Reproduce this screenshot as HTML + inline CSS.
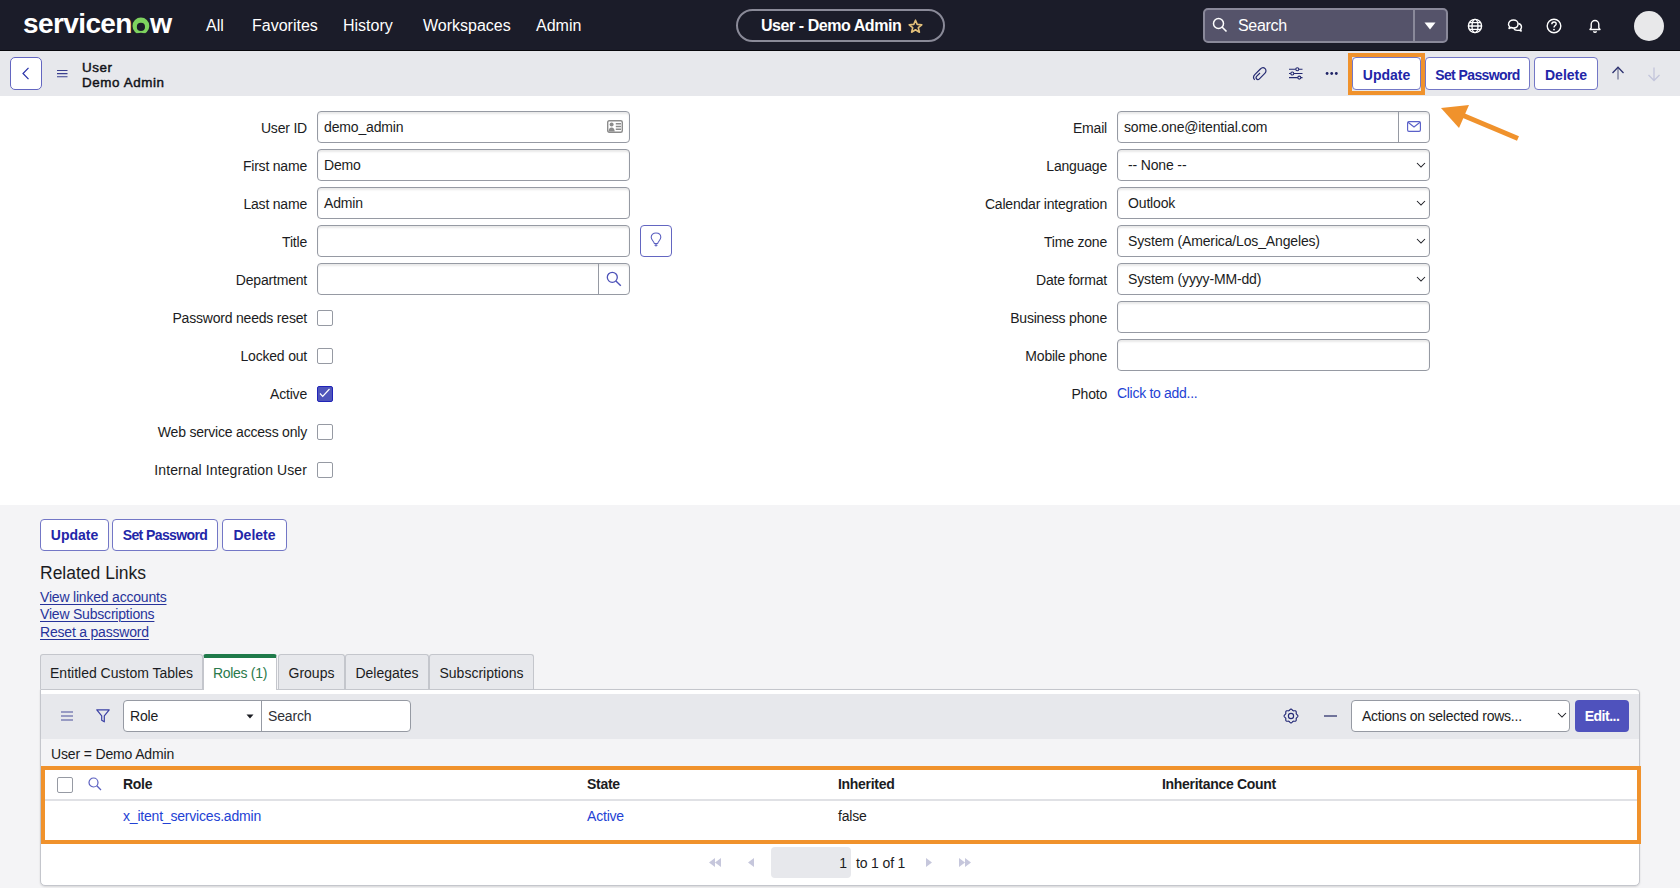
<!DOCTYPE html>
<html><head><meta charset="utf-8">
<style>
*{box-sizing:border-box;margin:0;padding:0}
html,body{-webkit-font-smoothing:antialiased;width:1680px;height:888px;overflow:hidden;background:#f4f4f6;font-family:"Liberation Sans",sans-serif;color:#1b1c22}
.a{position:absolute}
#hdr{left:0;top:0;width:1680px;height:50px;background:#1b1c29}
.nav{color:#fff;font-size:16px;top:17px;white-space:nowrap;line-height:18px}
#fh{left:0;top:50px;width:1680px;height:46px;background:#e7e8ec;border-top:1px solid #08080c}
#form{left:0;top:96px;width:1680px;height:409px;background:#fff}
.lbl{font-size:14px;letter-spacing:-0.2px;text-align:right;white-space:nowrap;color:#1b1c22;line-height:16px;width:300px}
.inp{background:#fff;border:1px solid #969aa3;border-radius:4px;box-shadow:inset 0 2px 2px rgba(0,0,0,.09);height:32px;width:313px}
.itx{font-size:14px;letter-spacing:-0.15px;white-space:nowrap;color:#1b1c22;line-height:16px}
.cb{width:16px;height:16px;border:1px solid #969aa3;border-radius:2px;background:#fff}
.btn{background:#fff;border:1px solid #7377c6;border-radius:4px;color:#2226a8;font-weight:bold;font-size:14px;text-align:center;white-space:nowrap;line-height:30px}
.lnk{color:#27339a;font-size:14px;letter-spacing:-0.2px;text-decoration:underline;text-decoration-thickness:1px;text-underline-offset:1.5px;white-space:nowrap;line-height:16px}
.tab{top:654px;height:35px;background:#e7e8ec;border:1px solid #c4c6cc;border-bottom:none;border-radius:3px 3px 0 0;font-size:14px;text-align:center;line-height:36px;white-space:nowrap;color:#1b1c22}
.th{font-weight:bold;font-size:14px;letter-spacing:-0.3px;white-space:nowrap;line-height:16px;top:776px}
.td{font-size:14px;letter-spacing:-0.2px;white-space:nowrap;line-height:16px;top:808px}
.sel{background:#fff;border:1px solid #969aa3;border-radius:4px;height:32px;width:313px}
svg{position:absolute;overflow:visible}
</style></head><body>
<!-- top header -->
<div id="hdr" class="a"></div>
<div class="a" style="left:23px;top:8px;font-size:28px;font-weight:bold;color:#fff;letter-spacing:-0.6px;line-height:32px">servicen</div>
<svg style="left:131px;top:16.5px" width="20" height="18" viewBox="0 0 20 18"><defs><clipPath id="lc"><rect x="0" y="0" width="20" height="16.8"/></clipPath></defs><circle cx="9.9" cy="9.0" r="8.4" fill="#7ed35f" clip-path="url(#lc)"/><circle cx="9.9" cy="9.9" r="4.1" fill="#1b1c29"/><ellipse cx="9.9" cy="17.6" rx="4.8" ry="1.9" fill="#1b1c29"/></svg>
<div class="a" style="left:150px;top:7px;font-size:28.5px;font-weight:bold;color:#fff;line-height:32px">w</div>
<div class="a nav" style="left:206px">All</div>
<div class="a nav" style="left:252px">Favorites</div>
<div class="a nav" style="left:343px">History</div>
<div class="a nav" style="left:423px">Workspaces</div>
<div class="a nav" style="left:536px">Admin</div>
<div class="a" style="left:735.5px;top:9px;width:209px;height:33px;border:2px solid #8a8a98;border-radius:17px"></div>
<div class="a nav" style="left:761px;font-weight:bold;letter-spacing:-0.45px">User - Demo Admin</div>
<svg style="left:908px;top:19px" width="15" height="15" viewBox="0 0 15 15"><path d="M7.5 1.2 L9.2 5.4 L13.8 5.8 L10.3 8.7 L11.4 13.2 L7.5 10.8 L3.6 13.2 L4.7 8.7 L1.2 5.8 L5.8 5.4 Z" fill="none" stroke="#e3c07a" stroke-width="1.6" stroke-linejoin="round"/></svg>
<div class="a" style="left:1202.5px;top:8px;width:245px;height:35px;background:#55536a;border:2px solid #8a899a;border-radius:5px"></div>
<div class="a" style="left:1413px;top:10px;width:1.5px;height:31px;background:#8a899a"></div>
<svg style="left:1212px;top:17px" width="16" height="16" viewBox="0 0 16 16"><circle cx="6.5" cy="6.5" r="5" fill="none" stroke="#fff" stroke-width="1.5"/><path d="M10 10 L14.5 14.5" stroke="#fff" stroke-width="1.6"/></svg>
<div class="a nav" style="left:1238px;top:17px;letter-spacing:-0.3px">Search</div>
<svg style="left:1424px;top:21.5px" width="12" height="8" viewBox="0 0 12 8"><path d="M0.5 0.5 L11.5 0.5 L6 7.5 Z" fill="#fff"/></svg>
<svg style="left:1467px;top:17.5px" width="16" height="16" viewBox="0 0 16 16"><g fill="none" stroke="#fff" stroke-width="1.4"><circle cx="8" cy="8" r="6.6"/><ellipse cx="8" cy="8" rx="3" ry="6.6"/><path d="M1.4 8 H14.6 M2.5 4.6 H13.5 M2.5 11.4 H13.5"/></g></svg>
<svg style="left:1507px;top:17.5px" width="16" height="16" viewBox="0 0 16 16"><g fill="none" stroke="#fff" stroke-width="1.4" stroke-linejoin="round"><path d="M1.5 6.5 C1.5 3.5 4 2 6.5 2 C9 2 11 3.5 11 6 C11 8.5 9 10 6.5 10 C5.5 10 4.8 9.8 4.2 9.5 L2 10.5 L2.6 8.5 C1.9 7.9 1.5 7.2 1.5 6.5 Z"/><path d="M11.3 5.5 C13.3 6 14.5 7.3 14.5 9 C14.5 9.8 14.2 10.5 13.6 11 L14.2 13 L12 12.1 C11.5 12.3 10.9 12.4 10.3 12.4 C8.6 12.4 7.2 11.6 6.6 10.3"/></g></svg>
<svg style="left:1546px;top:17.5px" width="16" height="16" viewBox="0 0 16 16"><g fill="none" stroke="#fff" stroke-width="1.4"><circle cx="8" cy="8" r="6.8"/><path d="M5.8 6.2 C5.8 4.8 6.8 4 8 4 C9.3 4 10.2 4.8 10.2 5.9 C10.2 7.4 8 7.6 8 9.4"/></g><circle cx="8" cy="11.6" r="0.9" fill="#fff"/></svg>
<svg style="left:1587px;top:17.5px" width="16" height="16" viewBox="0 0 16 16"><g fill="none" stroke="#fff" stroke-width="1.4" stroke-linejoin="round"><path d="M3 11.5 H13 L11.8 9.8 V6.5 C11.8 4.3 10.2 2.5 8 2.5 C5.8 2.5 4.2 4.3 4.2 6.5 V9.8 Z"/><path d="M6.5 13.2 C6.8 14 7.3 14.3 8 14.3 C8.7 14.3 9.2 14 9.5 13.2"/></g></svg>
<div class="a" style="left:1634px;top:11px;width:30px;height:30px;border-radius:50%;background:#e8e8ea"></div>

<!-- form header -->
<div id="fh" class="a"></div>
<div class="a" style="left:10px;top:57px;width:32px;height:33px;background:#fff;border:1px solid #6366c1;border-radius:5px"></div>
<svg style="left:22px;top:67px" width="8" height="13" viewBox="0 0 8 13"><path d="M6.5 0.8 L1 6.5 L6.5 12.2" fill="none" stroke="#2730a8" stroke-width="1.2"/></svg>
<svg style="left:57px;top:69px" width="11" height="9" viewBox="0 0 11 9"><path d="M0 1.5 H10.5 M0 4.6 H10.5 M0 7.8 H10.5" stroke="#3a3f8f" stroke-width="1.05"/></svg>
<div class="a" style="left:82px;top:60px;font-size:13.4px;line-height:15px;color:#111218;-webkit-text-stroke:0.45px #111218;letter-spacing:0.6px">User<br>Demo Admin</div>
<svg style="left:1252px;top:65px" width="16" height="17" viewBox="0 0 16 17"><path d="M8 9 L4.8 12.2 C3.8 13.2 3.9 14.3 4.6 15 C5.3 15.7 6.5 15.7 7.4 14.8 L12.8 9.4 C14.3 7.9 14.3 5.9 13.1 4.7 C11.9 3.5 9.9 3.5 8.4 5 L3 10.4 C1.3 12.1 1.3 14.4 2.7 15.8" fill="none" stroke="#252a72" stroke-width="1.2" transform="translate(0,-1)"/></svg>
<svg style="left:1289px;top:66px" width="14" height="14" viewBox="0 0 14 14"><g fill="none" stroke="#252a72" stroke-width="1.1"><path d="M0 3.3 H13.5 M0 7.5 H13.5 M0 11.6 H13.5"/><circle cx="8.3" cy="3.3" r="1.5" fill="#e7e8ec"/><circle cx="3.3" cy="7.5" r="1.5" fill="#e7e8ec"/><circle cx="10.3" cy="11.6" r="1.5" fill="#e7e8ec"/></g></svg>
<svg style="left:1325px;top:72px" width="14" height="4" viewBox="0 0 14 4"><circle cx="2.1" cy="1.5" r="1.4" fill="#1f2366"/><circle cx="6.7" cy="1.5" r="1.4" fill="#1f2366"/><circle cx="11.3" cy="1.5" r="1.4" fill="#1f2366"/></svg>
<div class="a btn" style="left:1352px;top:57px;width:69px;height:33px;line-height:32px;padding-top:1px">Update</div>
<div class="a btn" style="left:1425px;top:57px;width:105px;height:33px;line-height:32px;padding-top:1px;letter-spacing:-0.6px">Set Password</div>
<div class="a btn" style="left:1534px;top:57px;width:64px;height:33px;line-height:32px;padding-top:1px">Delete</div>
<svg style="left:1611px;top:66px" width="14" height="15" viewBox="0 0 14 15"><path d="M7 1.5 V13.5" stroke="#8a8ca8" stroke-width="1.6"/><path d="M1.5 7 L7 1.2 L12.5 7" fill="none" stroke="#2e3270" stroke-width="1.3"/></svg>
<svg style="left:1647px;top:67px" width="14" height="15" viewBox="0 0 14 15"><path d="M7 0.5 V13.5 M1.5 8 L7 13.5 L12.5 8" fill="none" stroke="#c3c5db" stroke-width="1.3"/></svg>
<div class="a" style="left:1348px;top:53px;width:77px;height:42px;border:4px solid #f0922c"></div>

<!-- form body -->
<div id="form" class="a"></div>
<div class="a lbl" style="left:7px;top:120px">User ID</div>
<div class="a inp" style="left:317px;top:111px"></div>
<div class="a itx" style="left:324px;top:119px">demo_admin</div>
<svg style="left:607px;top:120px" width="16" height="13" viewBox="0 0 16 13"><rect x="0.7" y="0.7" width="14.6" height="11.6" rx="1.5" fill="none" stroke="#8c8c8c" stroke-width="1.4"/><circle cx="4.6" cy="4.6" r="2" fill="#8c8c8c"/><path d="M1.5 11.5 C1.7 8.5 2.8 7.4 4.6 7.4 C6.4 7.4 7.5 8.5 7.7 11.5 Z" fill="#8c8c8c"/><path d="M8.8 3.8 H14 M8.8 6.5 H14 M8.8 9.2 H14" stroke="#8c8c8c" stroke-width="1.5"/></svg>

<div class="a lbl" style="left:7px;top:158px">First name</div>
<div class="a inp" style="left:317px;top:149px"></div>
<div class="a itx" style="left:324px;top:157px">Demo</div>

<div class="a lbl" style="left:7px;top:196px">Last name</div>
<div class="a inp" style="left:317px;top:187px"></div>
<div class="a itx" style="left:324px;top:195px">Admin</div>

<div class="a lbl" style="left:7px;top:234px">Title</div>
<div class="a inp" style="left:317px;top:225px"></div>
<div class="a" style="left:640px;top:225px;width:32px;height:32px;border:1px solid #6366c1;border-radius:4px;background:#fff"></div>
<svg style="left:650px;top:232px" width="12" height="17" viewBox="0 0 12 17"><path d="M4.3 11.5 C4 9.5 1.2 8 1.2 5.3 C1.2 2.7 3.3 1 6 1 C8.7 1 10.8 2.7 10.8 5.3 C10.8 8 8 9.5 7.7 11.5 Z" fill="none" stroke="#5a5fc0" stroke-width="1.1" stroke-linejoin="round"/><path d="M4.5 13.3 H7.5 M6 11.5 V14.5" stroke="#5a5fc0" stroke-width="1.1"/></svg>

<div class="a lbl" style="left:7px;top:272px">Department</div>
<div class="a inp" style="left:317px;top:263px"></div>
<div class="a" style="left:598px;top:264px;width:1px;height:30px;background:#969aa3"></div>
<svg style="left:606px;top:271px" width="16" height="16" viewBox="0 0 16 16"><circle cx="6.3" cy="6.3" r="5" fill="none" stroke="#4d52b8" stroke-width="1.3"/><path d="M9.9 9.9 L14.8 14.8" stroke="#4d52b8" stroke-width="1.4"/></svg>

<div class="a lbl" style="left:7px;top:310px">Password needs reset</div>
<div class="a cb" style="left:316.5px;top:310px"></div>
<div class="a lbl" style="left:7px;top:348px">Locked out</div>
<div class="a cb" style="left:316.5px;top:348px"></div>
<div class="a lbl" style="left:7px;top:386px">Active</div>
<div class="a cb" style="left:316.5px;top:386px;background:#4f55bb;border-color:#2024b8"></div>
<svg style="left:319px;top:388px" width="12" height="10" viewBox="0 0 12 10"><path d="M1 5.5 L3.7 8.3 L10.5 1" fill="none" stroke="#fff" stroke-width="1.2"/></svg>
<div class="a lbl" style="left:7px;top:424px">Web service access only</div>
<div class="a cb" style="left:316.5px;top:424px"></div>
<div class="a lbl" style="left:7px;top:462px;letter-spacing:0.1px">Internal Integration User</div>
<div class="a cb" style="left:316.5px;top:462px"></div>

<!-- right column -->
<div class="a lbl" style="left:807px;top:120px">Email</div>
<div class="a inp" style="left:1117px;top:111px"></div>
<div class="a" style="left:1398px;top:112px;width:1px;height:30px;background:#969aa3"></div>
<div class="a itx" style="left:1124px;top:119px">some.one@itential.com</div>
<svg style="left:1407px;top:121px" width="14" height="11" viewBox="0 0 14 11"><rect x="0.6" y="0.6" width="12.8" height="9.8" rx="1.3" fill="none" stroke="#5a60c8" stroke-width="1.15"/><path d="M1 1.2 L7 6 L13 1.2" fill="none" stroke="#5a60c8" stroke-width="1.15"/></svg>

<div class="a lbl" style="left:807px;top:158px">Language</div>
<div class="a inp" style="left:1117px;top:149px"></div>
<div class="a itx" style="left:1128px;top:157px">-- None --</div>
<div class="a lbl" style="left:807px;top:196px">Calendar integration</div>
<div class="a inp" style="left:1117px;top:187px"></div>
<div class="a itx" style="left:1128px;top:195px">Outlook</div>
<div class="a lbl" style="left:807px;top:234px">Time zone</div>
<div class="a inp" style="left:1117px;top:225px"></div>
<div class="a itx" style="left:1128px;top:233px">System (America/Los_Angeles)</div>
<div class="a lbl" style="left:807px;top:272px">Date format</div>
<div class="a inp" style="left:1117px;top:263px"></div>
<div class="a itx" style="left:1128px;top:271px">System (yyyy-MM-dd)</div>
<svg style="left:1416px;top:161.5px" width="10" height="7" viewBox="0 0 10 7"><path d="M1 1 L5 5 L9 1" fill="none" stroke="#1b1c22" stroke-width="1.05"/></svg>
<svg style="left:1416px;top:199.5px" width="10" height="7" viewBox="0 0 10 7"><path d="M1 1 L5 5 L9 1" fill="none" stroke="#1b1c22" stroke-width="1.05"/></svg>
<svg style="left:1416px;top:237.5px" width="10" height="7" viewBox="0 0 10 7"><path d="M1 1 L5 5 L9 1" fill="none" stroke="#1b1c22" stroke-width="1.05"/></svg>
<svg style="left:1416px;top:275.5px" width="10" height="7" viewBox="0 0 10 7"><path d="M1 1 L5 5 L9 1" fill="none" stroke="#1b1c22" stroke-width="1.05"/></svg>

<div class="a lbl" style="left:807px;top:310px">Business phone</div>
<div class="a inp" style="left:1117px;top:301px"></div>
<div class="a lbl" style="left:807px;top:348px">Mobile phone</div>
<div class="a inp" style="left:1117px;top:339px"></div>
<div class="a lbl" style="left:807px;top:386px">Photo</div>
<div class="a itx" style="left:1117px;top:385px;color:#2342d4;letter-spacing:-0.3px">Click to add...</div>

<!-- arrow -->
<svg style="left:0;top:0" width="1680" height="888" viewBox="0 0 1680 888"><path d="M1518 138.5 L1455 112" stroke="#f0922c" stroke-width="5"/><path d="M1441 108 L1469 105 L1459 128 Z" fill="#f0922c"/></svg>

<!-- bottom buttons -->
<div class="a btn" style="left:40px;top:519px;width:69px;height:32px">Update</div>
<div class="a btn" style="left:112px;top:519px;width:106px;height:32px;letter-spacing:-0.6px">Set Password</div>
<div class="a btn" style="left:222px;top:519px;width:65px;height:32px">Delete</div>

<div class="a" style="left:40px;top:563px;font-size:17.5px;line-height:20px;white-space:nowrap">Related Links</div>
<div class="a lnk" style="left:40px;top:589px">View linked accounts</div>
<div class="a lnk" style="left:40px;top:606px">View Subscriptions</div>
<div class="a lnk" style="left:40px;top:624px">Reset a password</div>

<!-- panel -->
<div class="a" style="left:40px;top:689px;width:1600px;height:197px;background:#fff;border:1px solid #c4c6cc;border-radius:0 4px 5px 5px;box-shadow:0 1px 2px rgba(0,0,0,.12)"></div>
<!-- tabs -->
<div class="a tab" style="left:40px;width:163px">Entitled Custom Tables</div>
<div class="a tab" style="left:203px;width:74px;background:#fff;color:#2a7a4b;border-top:4px solid #1f7a4a;line-height:30px;height:36px;letter-spacing:-0.3px">Roles (1)</div>
<div class="a tab" style="left:278px;width:67px">Groups</div>
<div class="a tab" style="left:345px;width:84px">Delegates</div>
<div class="a tab" style="left:429px;width:105px">Subscriptions</div>

<!-- related list panel -->

<div class="a" style="left:41px;top:694px;width:1598px;height:45px;background:#e7e8ec"></div>
<div class="a" style="left:41px;top:739px;width:1598px;height:28px;background:#f4f4f6"></div>
<svg style="left:61px;top:711px" width="12" height="10" viewBox="0 0 12 10"><path d="M0 1 H12 M0 5 H12 M0 9 H12" stroke="#4a4f9a" stroke-width="1.2"/></svg>
<svg style="left:96px;top:709px" width="14" height="14" viewBox="0 0 14 14"><path d="M0.8 0.8 H13.2 L8.3 6.8 V12.8 L5.7 11.2 V6.8 Z" fill="none" stroke="#3b40a5" stroke-width="1.2" stroke-linejoin="round"/></svg>
<div class="a" style="left:123px;top:700px;width:288px;height:32px;background:#fff;border:1px solid #969aa3;border-radius:4px"></div>
<div class="a" style="left:261px;top:701px;width:1px;height:30px;background:#969aa3"></div>
<div class="a itx" style="left:130px;top:708px">Role</div>
<svg style="left:246px;top:714px" width="8" height="5" viewBox="0 0 8 5"><path d="M0.5 0.5 H7.5 L4 4.5 Z" fill="#1b1c22"/></svg>
<div class="a itx" style="left:268px;top:708px;color:#2e2f36">Search</div>
<svg style="left:1282.5px;top:708px" width="16" height="16" viewBox="0 0 16 16"><g fill="none" stroke="#262b78" stroke-width="1.15"><path d="M8.00 1.10 L8.27 1.13 L8.53 1.24 L8.78 1.39 L9.01 1.59 L9.23 1.82 L9.43 2.05 L9.61 2.28 L9.80 2.47 L9.98 2.62 L10.18 2.73 L10.40 2.80 L10.64 2.82 L10.91 2.81 L11.19 2.79 L11.50 2.76 L11.81 2.75 L12.12 2.78 L12.41 2.84 L12.66 2.95 L12.88 3.12 L13.05 3.34 L13.16 3.59 L13.22 3.88 L13.25 4.19 L13.24 4.50 L13.21 4.81 L13.19 5.09 L13.18 5.36 L13.20 5.60 L13.27 5.82 L13.38 6.02 L13.53 6.20 L13.72 6.39 L13.95 6.57 L14.18 6.77 L14.41 6.99 L14.61 7.22 L14.76 7.47 L14.87 7.73 L14.90 8.00 L14.87 8.27 L14.76 8.53 L14.61 8.78 L14.41 9.01 L14.18 9.23 L13.95 9.43 L13.72 9.61 L13.53 9.80 L13.38 9.98 L13.27 10.18 L13.20 10.40 L13.18 10.64 L13.19 10.91 L13.21 11.19 L13.24 11.50 L13.25 11.81 L13.22 12.12 L13.16 12.41 L13.05 12.66 L12.88 12.88 L12.66 13.05 L12.41 13.16 L12.12 13.22 L11.81 13.25 L11.50 13.24 L11.19 13.21 L10.91 13.19 L10.64 13.18 L10.40 13.20 L10.18 13.27 L9.98 13.38 L9.80 13.53 L9.61 13.72 L9.43 13.95 L9.23 14.18 L9.01 14.41 L8.78 14.61 L8.53 14.76 L8.27 14.87 L8.00 14.90 L7.73 14.87 L7.47 14.76 L7.22 14.61 L6.99 14.41 L6.77 14.18 L6.57 13.95 L6.39 13.72 L6.20 13.53 L6.02 13.38 L5.82 13.27 L5.60 13.20 L5.36 13.18 L5.09 13.19 L4.81 13.21 L4.50 13.24 L4.19 13.25 L3.88 13.22 L3.59 13.16 L3.34 13.05 L3.12 12.88 L2.95 12.66 L2.84 12.41 L2.78 12.12 L2.75 11.81 L2.76 11.50 L2.79 11.19 L2.81 10.91 L2.82 10.64 L2.80 10.40 L2.73 10.18 L2.62 9.98 L2.47 9.80 L2.28 9.61 L2.05 9.43 L1.82 9.23 L1.59 9.01 L1.39 8.78 L1.24 8.53 L1.13 8.27 L1.10 8.00 L1.13 7.73 L1.24 7.47 L1.39 7.22 L1.59 6.99 L1.82 6.77 L2.05 6.57 L2.28 6.39 L2.47 6.20 L2.62 6.02 L2.73 5.82 L2.80 5.60 L2.82 5.36 L2.81 5.09 L2.79 4.81 L2.76 4.50 L2.75 4.19 L2.78 3.88 L2.84 3.59 L2.95 3.34 L3.12 3.12 L3.34 2.95 L3.59 2.84 L3.88 2.78 L4.19 2.75 L4.50 2.76 L4.81 2.79 L5.09 2.81 L5.36 2.82 L5.60 2.80 L5.82 2.73 L6.02 2.62 L6.20 2.47 L6.39 2.28 L6.57 2.05 L6.77 1.82 L6.99 1.59 L7.22 1.39 L7.47 1.24 L7.73 1.13 Z"/><circle cx="8" cy="8" r="2.6"/></g></svg>
<div class="a" style="left:1324px;top:715px;width:13px;height:2px;background:#70739a"></div>
<div class="a" style="left:1351px;top:700px;width:219px;height:32px;background:#fff;border:1px solid #969aa3;border-radius:4px"></div>
<div class="a itx" style="left:1362px;top:708px;letter-spacing:-0.25px">Actions on selected rows...</div>
<svg style="left:1557px;top:712px" width="10" height="7" viewBox="0 0 10 7"><path d="M1 1 L5 5 L9 1" fill="none" stroke="#1b1c22" stroke-width="1.05"/></svg>
<div class="a" style="left:1575px;top:700px;width:54px;height:32px;background:#4f52bd;border-radius:4px;color:#fff;font-weight:bold;font-size:14px;text-align:center;line-height:33px;letter-spacing:-0.5px">Edit...</div>
<div class="a itx" style="left:51px;top:746px">User = Demo Admin</div>

<!-- table -->
<div class="a cb" style="left:57px;top:777px"></div>
<svg style="left:88px;top:777px" width="14" height="14" viewBox="0 0 14 14"><circle cx="5.5" cy="5.5" r="4.5" fill="none" stroke="#5a5fc0" stroke-width="1.2"/><path d="M8.8 8.8 L13 13" stroke="#5a5fc0" stroke-width="1.3"/></svg>
<div class="a th" style="left:123px">Role</div>
<div class="a th" style="left:587px">State</div>
<div class="a th" style="left:838px">Inherited</div>
<div class="a th" style="left:1162px">Inheritance Count</div>
<div class="a" style="left:41px;top:799px;width:1598px;height:2px;background:#e0e1e5"></div>
<div class="a td" style="left:123px;color:#2342d4">x_itent_services.admin</div>
<div class="a td" style="left:587px;color:#2342d4">Active</div>
<div class="a td" style="left:838px">false</div>
<div class="a" style="left:40.5px;top:766px;width:1600.5px;height:78px;border:4px solid #f0922c"></div>

<!-- pagination -->
<svg style="left:709px;top:858px" width="12" height="9" viewBox="0 0 12 9"><path d="M6 0 L0 4.5 L6 9 Z M12 0 L6 4.5 L12 9 Z" fill="#c6c7dc"/></svg>
<svg style="left:748px;top:858px" width="6" height="9" viewBox="0 0 6 9"><path d="M6 0 L0 4.5 L6 9 Z" fill="#c6c7dc"/></svg>
<div class="a" style="left:771px;top:847px;width:80px;height:31px;background:#e7e8ec;border-radius:4px"></div>
<div class="a itx" style="left:772px;top:855px;width:75px;text-align:right">1</div>
<div class="a itx" style="left:856px;top:855px">to 1 of 1</div>
<svg style="left:926px;top:858px" width="6" height="9" viewBox="0 0 6 9"><path d="M0 0 L6 4.5 L0 9 Z" fill="#c6c7dc"/></svg>
<svg style="left:959px;top:858px" width="12" height="9" viewBox="0 0 12 9"><path d="M0 0 L6 4.5 L0 9 Z M6 0 L12 4.5 L6 9 Z" fill="#c6c7dc"/></svg>
</body></html>
